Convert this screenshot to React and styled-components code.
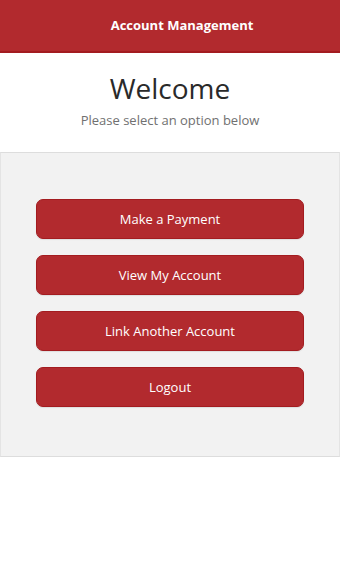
import React from "react";
import styled, { createGlobalStyle } from "styled-components";

const RED = "#b22a2e";
const RED_DARK = "#a31c20";

const GlobalStyle = createGlobalStyle`
  html, body {
    margin: 0;
    padding: 0;
    background: #ffffff;
    font-family: "Open Sans", "Noto Sans", sans-serif;
  }
`;

const Page = styled.div`
  width: 340px;
  min-height: 567px;
  background: #ffffff;
`;

const Header = styled.header`
  height: 53px;
  box-sizing: border-box;
  background: ${RED};
  border-bottom: 2px solid ${RED_DARK};
  display: flex;
  align-items: center;
  justify-content: center;
  padding-left: 24px;
  padding-bottom: 2px;
`;

const HeaderTitle = styled.h1`
  margin: 0;
  color: #ffffff;
  font-size: 13px;
  font-weight: 700;
`;

const Intro = styled.section`
  display: flex;
  flex-direction: column;
  align-items: center;
  padding-top: 16px;
  height: 99px;
  box-sizing: border-box;
`;

const Title = styled.h2`
  margin: 0;
  font-size: 28px;
  font-weight: 400;
  color: #2a2a2a;
  line-height: 38px;
`;

const Subtitle = styled.p`
  margin: 4px 0 0;
  font-size: 13px;
  color: #707070;
  line-height: 18px;
`;

const Panel = styled.section`
  background: #f2f2f2;
  border-top: 1px solid #dddddd;
  border-bottom: 1px solid #dddddd;
  border-left: 1px solid #e4e4e4;
  border-right: 1px solid #e4e4e4;
  padding: 46px 35px 49px;
  display: flex;
  flex-direction: column;
  gap: 16px;
`;

const ActionButton = styled.button`
  height: 40px;
  width: 100%;
  background: ${RED};
  border: 1px solid ${RED_DARK};
  border-radius: 7px;
  color: #ffffff;
  font-family: "Open Sans", "Noto Sans", sans-serif;
  font-size: 13px;
  font-weight: 400;
  cursor: pointer;
  box-shadow: 0 1px 1px rgba(0, 0, 0, 0.08);
`;

const actions = ["Make a Payment", "View My Account", "Link Another Account", "Logout"];

export default function App() {
  return (
    <Page>
      <GlobalStyle />
      <Header>
        <HeaderTitle>Account Management</HeaderTitle>
      </Header>
      <Intro>
        <Title>Welcome</Title>
        <Subtitle>Please select an option below</Subtitle>
      </Intro>
      <Panel>
        {actions.map((label) => (
          <ActionButton key={label}>{label}</ActionButton>
        ))}
      </Panel>
    </Page>
  );
}
